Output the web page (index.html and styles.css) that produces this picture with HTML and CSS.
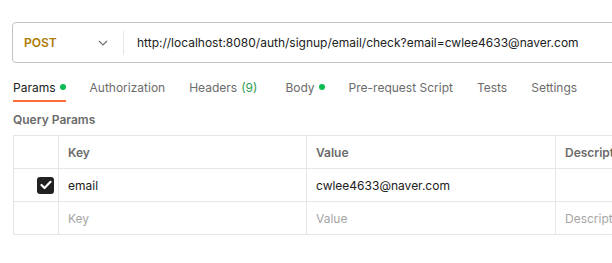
FILE: index.html
```html
<!DOCTYPE html>
<html>
<head>
<meta charset="utf-8">
<link rel="stylesheet" href="styles.css">
</head>
<body>
<div class="page">
  <div class="urlbar">
    <div class="method">
      <span class="method-name">POST</span>
      <svg class="chev" width="10" height="6" viewBox="0 0 10 6"><path d="M1 1 L5 5 L9 1" fill="none" stroke="#6b6b6b" stroke-width="1.1"/></svg>
    </div>
    <div class="sep"></div>
    <div class="url">http://localhost:8080/auth/signup/email/check?email=cwlee4633@naver.com</div>
  </div>
  <div class="tabs">
    <div class="tab active">Params<span class="dot"></span></div>
    <div class="tab">Authorization</div>
    <div class="tab tab-wide">Headers <span class="count">(9)</span></div>
    <div class="tab">Body<span class="dot"></span></div>
    <div class="tab">Pre-request Script</div>
    <div class="tab">Tests</div>
    <div class="tab">Settings</div>
  </div>
  <div class="section-title">Query Params</div>
  <div class="table">
    <div class="row head">
      <div class="cell c0"></div>
      <div class="cell c1">Key</div>
      <div class="cell c2">Value</div>
      <div class="cell c3">Description</div>
    </div>
    <div class="row">
      <div class="cell c0"><span class="check"><svg width="12" height="10" viewBox="0 0 12 10"><path d="M1.5 5 L4.5 8 L10.5 1.8" fill="none" stroke="#fff" stroke-width="2.2" stroke-linecap="round" stroke-linejoin="round"/></svg></span></div>
      <div class="cell c1 val">email</div>
      <div class="cell c2 val">cwlee4633@naver.com</div>
      <div class="cell c3"></div>
    </div>
    <div class="row">
      <div class="cell c0"></div>
      <div class="cell c1 ph">Key</div>
      <div class="cell c2 ph">Value</div>
      <div class="cell c3 ph">Description</div>
    </div>
  </div>
</div>
</body>
</html>
```
FILE: styles.css
```css
html, body {
  margin: 0;
  padding: 0;
  background: #fff;
  overflow: hidden;
}
body {
  font-family: Inter, "Noto Sans", sans-serif;
  font-size: 12px;
  color: #212121;
}
.page {
  padding: 22px 0 0 12px;
  width: 800px;
}
.urlbar {
  display: flex;
  align-items: center;
  height: 39px;
  border: 1px solid #c4c4c4;
  border-radius: 4px;
  width: 760px;
}
.method {
  display: flex;
  align-items: center;
  width: 110px;
  box-sizing: border-box;
  padding-left: 11px;
}
.method-name {
  color: #ad7a03;
  font-weight: 600;
  font-size: 12px;
  width: 74px;
}
.chev { display: block; }
.sep {
  width: 1px;
  height: 24px;
  background: #e6e6e6;
}
.url {
  padding-left: 13px;
  white-space: nowrap;
  color: #212121;
}
.tabs {
  display: flex;
  margin-top: 13px;
  padding-left: 1px;
}
.tab {
  display: flex;
  align-items: center;
  box-sizing: border-box;
  height: 26px;
  padding-bottom: 4px;
  margin-right: 24px;
  color: #6b6b6b;
  white-space: nowrap;
}
.tab.tab-wide { margin-right: 28px; }
.tab.active {
  color: #212121;
  border-bottom: 2px solid #ff6c37;
  padding-bottom: 2px;
}
.dot {
  width: 6px;
  height: 6px;
  border-radius: 50%;
  background: #0cbb52;
  margin-left: 4px;
}
.count { color: #2e9b4f; margin-left: 4px; }
.section-title {
  margin-top: 9px;
  padding-left: 1px;
  font-weight: 600;
  color: #6b6b6b;
  height: 24px;
  line-height: 18px;
}
.table {
  margin-left: 1px;
  border-top: 1px solid #e6e6e6;
  border-left: 1px solid #e6e6e6;
  width: 760px;
}
.row {
  display: flex;
  height: 32px;
  border-bottom: 1px solid #e6e6e6;
}
.cell {
  display: flex;
  align-items: center;
  box-sizing: border-box;
  border-right: 1px solid #e6e6e6;
  padding-left: 9px;
  white-space: nowrap;
  overflow: hidden;
}
.c0 { width: 45px; justify-content: flex-end; padding-right: 4px; padding-left: 0; }
.c1 { width: 248px; }
.c2 { width: 249px; }
.c3 { flex: 1; border-right: 0; }
.head .cell { font-weight: 600; color: #6b6b6b; }
.ph { color: #a6a6a6; }
.check {
  width: 17px;
  height: 17px;
  border-radius: 3px;
  background: #212121;
  display: flex;
  align-items: center;
  justify-content: center;
}
```
